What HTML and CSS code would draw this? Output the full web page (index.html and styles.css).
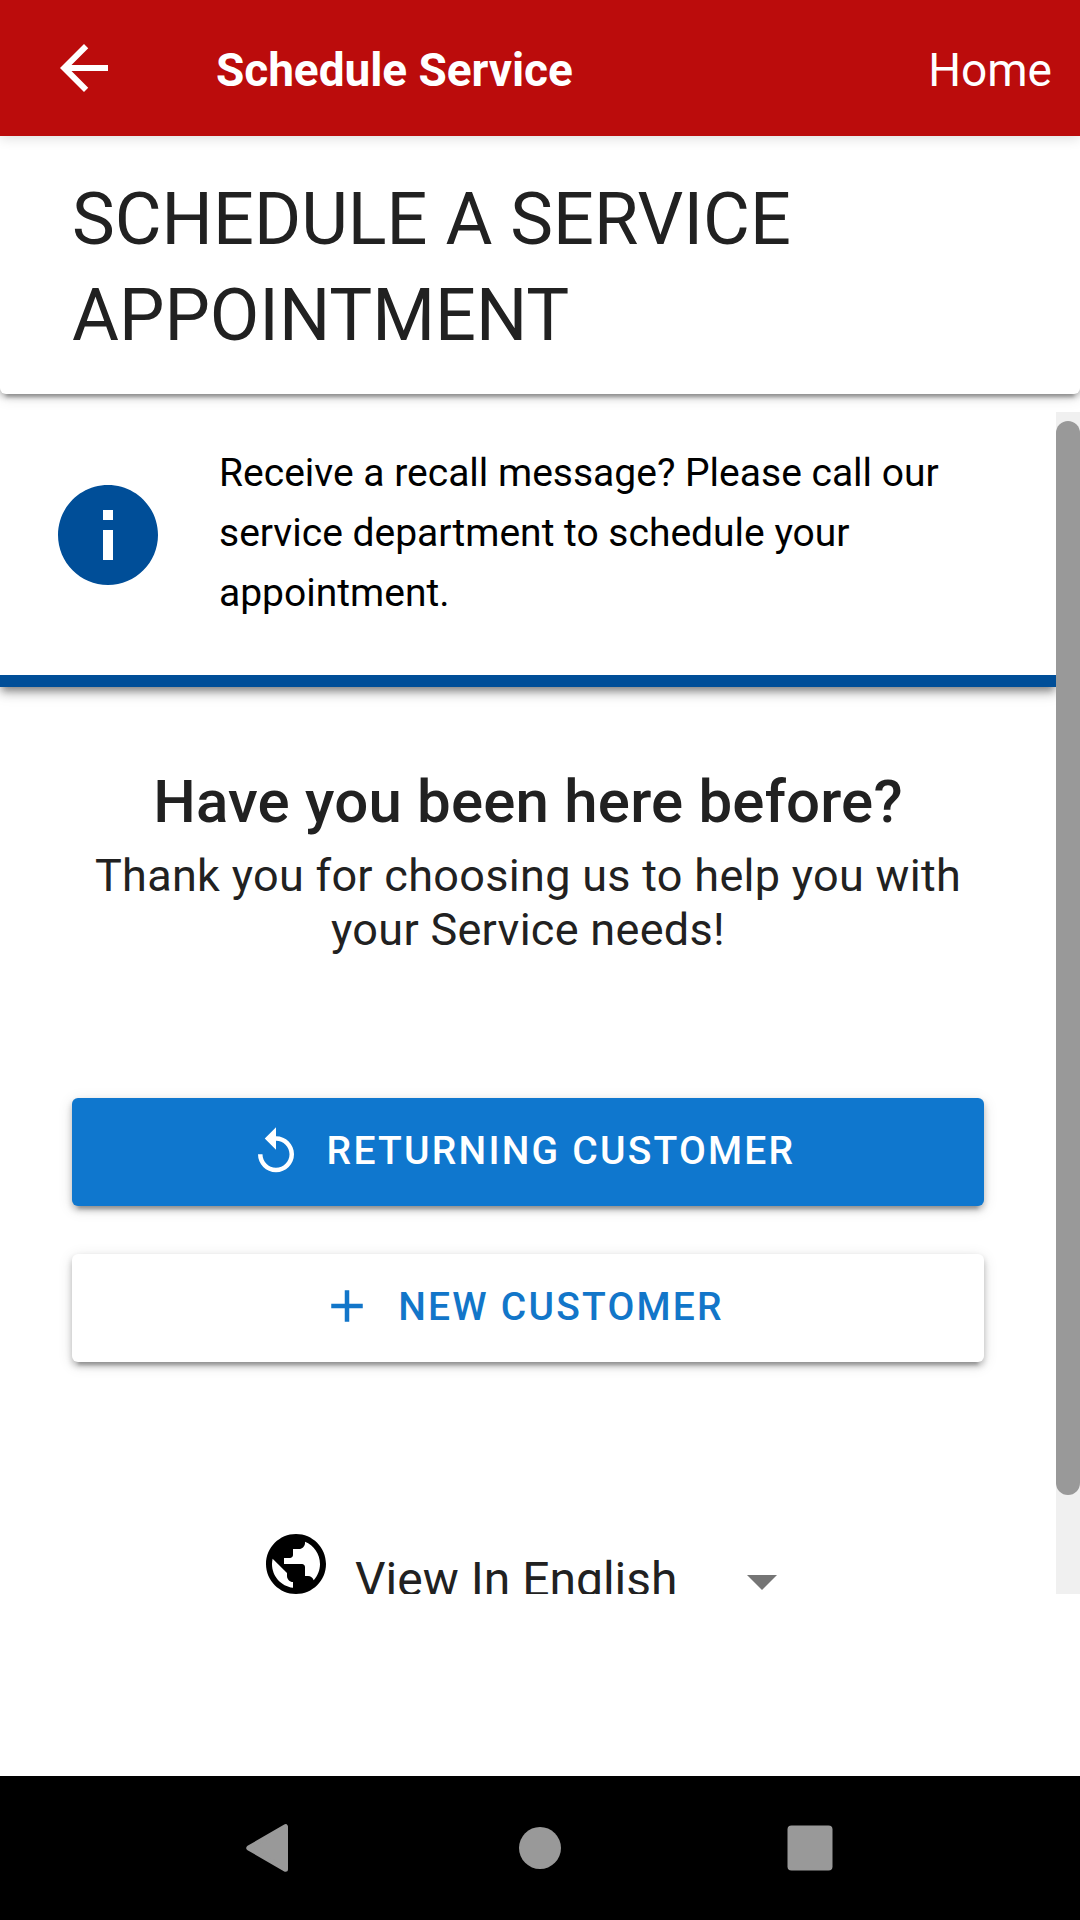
FILE: index.html
```
<!DOCTYPE html>
<html lang="en">
<head>
<meta charset="utf-8">
<title>Schedule Service</title>
<link rel="stylesheet" href="styles.css">
</head>
<body>
<div class="app">
  <header class="app-bar">
    <svg class="back-icon" viewBox="0 0 24 24"><path d="M20 11H7.83l5.59-5.59L12 4l-8 8 8 8 1.41-1.41L7.83 13H20v-2z"/></svg>
    <span class="app-title">Schedule Service</span>
    <a class="home-link">Home</a>
  </header>
  <section class="page-heading">
    <h1>SCHEDULE A SERVICE APPOINTMENT</h1>
  </section>
  <main class="scroll-area">
    <div class="scroll-content">
      <div class="banner">
        <svg class="info-icon" viewBox="0 0 24 24"><path d="M12 2C6.48 2 2 6.48 2 12s4.48 10 10 10 10-4.48 10-10S17.52 2 12 2zm1 15h-2v-6h2v6zm0-8h-2V7h2v2z"/></svg>
        <p class="banner-text">Receive a recall message? Please call our service department to schedule your appointment.</p>
      </div>
      <h2 class="question">Have you been here before?</h2>
      <p class="thanks">Thank you for choosing us to help you with your Service needs!</p>
      <div class="actions">
        <button class="btn btn-primary">
          <svg class="btn-icon" viewBox="0 0 24 24"><path d="M12 5V1L7 6l5 5V7c3.31 0 6 2.69 6 6s-2.69 6-6 6-6-2.69-6-6H4c0 4.42 3.58 8 8 8s8-3.58 8-8-3.58-8-8-8z"/></svg>
          <span class="btn-label">RETURNING CUSTOMER</span>
        </button>
        <button class="btn btn-plain">
          <svg class="btn-icon" viewBox="0 0 24 24"><path d="M19 13h-6v6h-2v-6H5v-2h6V5h2v6h6v2z"/></svg>
          <span class="btn-label">NEW CUSTOMER</span>
        </button>
      </div>
      <div class="language">
        <svg class="globe-icon" viewBox="0 0 24 24"><path d="M12 2C6.48 2 2 6.48 2 12s4.48 10 10 10 10-4.48 10-10S17.52 2 12 2zm-1 17.93c-3.95-.49-7-3.85-7-7.93 0-.62.08-1.21.21-1.79L9 15v1c0 1.1.9 2 2 2v1.93zm6.9-2.54c-.26-.81-1-1.39-1.9-1.39h-1v-3c0-.55-.45-1-1-1H8v-2h2c.55 0 1-.45 1-1V7h2c1.1 0 2-.9 2-2v-.41c2.93 1.19 5 4.06 5 7.41 0 2.08-.8 3.97-2.1 5.39z"/></svg>
        <div class="select">
          <span class="select-value">View In English</span>
          <svg class="caret-icon" viewBox="0 0 24 24"><path d="M7 10l5 5 5-5z"/></svg>
        </div>
      </div>
    </div>
    <div class="scrollbar"><div class="scroll-thumb"></div></div>
  </main>
  <nav class="system-nav">
    <svg viewBox="0 0 60 60"><path d="M45.5 8.7v42.6L8.8 30z" stroke-width="5" stroke-linejoin="round"/></svg>
    <svg viewBox="0 0 60 60"><circle cx="30" cy="30" r="21"/></svg>
    <svg viewBox="0 0 60 60"><rect x="7.5" y="7.5" width="45" height="45" rx="4"/></svg>
  </nav>
</div>
</body>
</html>
```
FILE: styles.css
```
* {
  box-sizing: border-box;
  margin: 0;
  padding: 0;
}

body {
  font-family: Roboto, "Liberation Sans", sans-serif;
  color: #212121;
  background: #fff;
}

svg {
  display: block;
  flex: none;
  fill: currentColor;
}

.app {
  display: flex;
  flex-direction: column;
  width: 1080px;
  height: 1920px;
  overflow: hidden;
}

.app-bar {
  display: flex;
  align-items: center;
  flex: none;
  height: 136px;
  padding: 0 28px 0 48px;
  color: #fff;
  background: #bb0c0c;
  box-shadow: 0 2px 12px rgba(0, 0, 0, .14);
  z-index: 2;
}

.back-icon {
  width: 72px;
  height: 72px;
  margin-right: 96px;
}

.app-title,
.home-link {
  padding-top: 4px;
  font-size: 46px;
  line-height: 54px;
}

.app-title {
  font-weight: 700;
  letter-spacing: -.06px;
}

.home-link {
  margin-left: auto;
}

.page-heading {
  flex: none;
  height: 258px;
  padding: 36px 72px 0;
  border-radius: 0 0 6px 6px;
  background: #fff;
  box-shadow: 0 9px 3px -6px rgba(0, 0, 0, .2), 0 3px 6px rgba(0, 0, 0, .28), 0 3px 15px rgba(0, 0, 0, .12);
  z-index: 1;
}

.page-heading h1 {
  font-size: 72px;
  font-weight: 400;
  line-height: 96px;
}

.scroll-area {
  display: flex;
  flex: none;
  height: 1182px;
  margin-top: 18px;
  overflow: hidden;
}

.scroll-content {
  width: 1056px;
  overflow: hidden;
}

.banner {
  display: flex;
  height: 275px;
  padding: 31px 48px 0;
  border-bottom: 12px solid #004e98;
  box-shadow: 0 6px 6px -3px rgba(0, 0, 0, .2), 0 5px 10px rgba(0, 0, 0, .3), 0 3px 18px rgba(0, 0, 0, .12);
}

.info-icon {
  width: 120px;
  height: 120px;
  margin: 32px 51px 0 0;
  color: #004e98;
}

.banner-text {
  width: 740px;
  font-size: 39px;
  line-height: 60px;
  color: #000;
}

.question {
  margin-top: 75px;
  font-size: 60px;
  font-weight: 500;
  line-height: 80px;
  letter-spacing: .19px;
  text-align: center;
}

.thanks {
  margin-top: 7px;
  padding: 0 72px;
  font-size: 45px;
  line-height: 54px;
  letter-spacing: .3px;
  text-align: center;
}

.actions {
  display: flex;
  flex-direction: column;
  gap: 48px;
  margin: 141px 72px 0;
}

.btn {
  display: flex;
  align-items: center;
  justify-content: center;
  height: 108px;
  border: 0;
  border-radius: 6px;
  font-family: inherit;
  font-size: 39px;
  font-weight: 500;
  letter-spacing: 2.22px;
  box-shadow: 0 9px 3px -6px rgba(0, 0, 0, .2), 0 4px 6px rgba(0, 0, 0, .24), 0 3px 15px rgba(0, 0, 0, .12);
}

.btn-primary {
  color: #fff;
  background: #0f77ce;
}

.btn-plain {
  color: #1276c9;
  background: #fff;
}

.btn-icon {
  width: 54px;
  height: 54px;
  margin: 0 24px 1px -12px;
}

.btn-plain .btn-icon {
  margin-bottom: 5px;
}

.btn-label {
  padding-bottom: 2px;
}

.language {
  display: flex;
  margin: 166px 0 0 260px;
}

.globe-icon {
  width: 72px;
  height: 72px;
  margin-right: 23px;
  color: #000;
}

.select {
  display: flex;
  margin-top: 16px;
}

.select-value {
  width: 371px;
  font-size: 48px;
  line-height: 72px;
}

.caret-icon {
  width: 72px;
  height: 72px;
  margin-top: 1px;
  color: #757575;
}

.scrollbar {
  width: 24px;
  padding-top: 9px;
  background: #f0f0f0;
}

.scroll-thumb {
  height: 1074px;
  border-radius: 12px;
  background: #999;
}

.system-nav {
  display: flex;
  align-items: center;
  justify-content: space-between;
  height: 144px;
  margin-top: auto;
  padding: 0 240px;
  color: #999;
  background: #000;
}

.system-nav svg {
  width: 60px;
  height: 60px;
}

.system-nav path {
  stroke: currentColor;
}
```
